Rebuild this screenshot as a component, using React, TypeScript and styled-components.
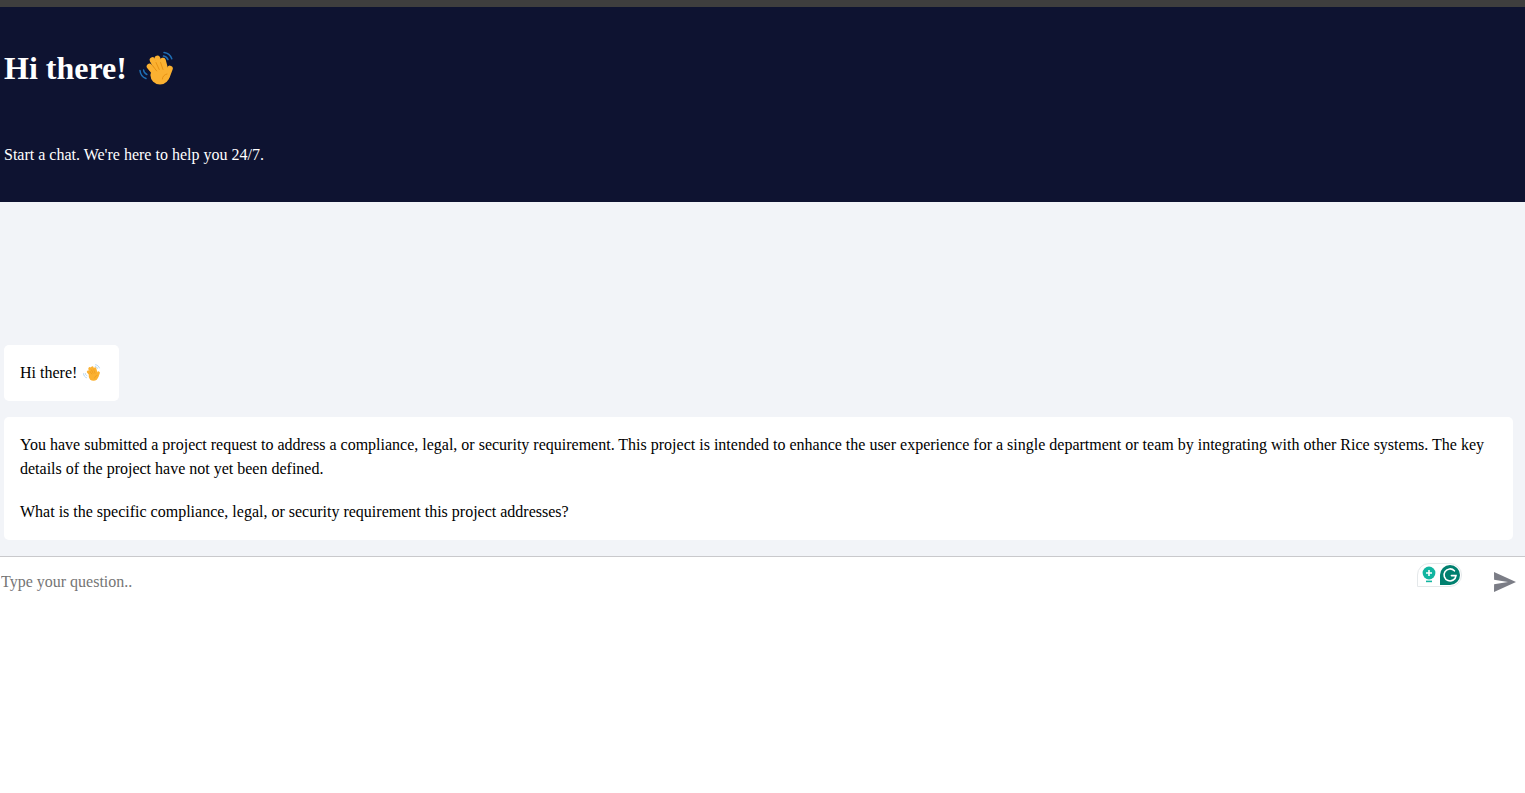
import React from 'react';
import styled, { createGlobalStyle } from 'styled-components';

const GlobalStyle = createGlobalStyle`
  html, body {
    margin: 0;
    padding: 0;
    background: #fff;
    font-family: "Liberation Serif", "Times New Roman", serif;
    font-size: 16px;
    color: #000;
  }
`;

const Page = styled.div`
  display: flex;
  flex-direction: column;
  height: 793px;
  overflow: hidden;
`;

const TopStrip = styled.div`
  flex: none;
  height: 7px;
  background: #3e3e3e;
`;

const Header = styled.header`
  flex: none;
  box-sizing: border-box;
  height: 195px;
  padding: 43px 4px 0;
  background: #0e1331;
  color: #fff;
`;

const Title = styled.h1`
  display: flex;
  align-items: center;
  gap: 12px;
  margin: 0;
  height: 37px;
  font-size: 32px;
  line-height: 37px;
  font-weight: 700;
`;

const Subtitle = styled.p`
  margin: 59px 0 0;
  font-size: 16px;
  line-height: 18px;
`;

const Messages = styled.main`
  flex: none;
  box-sizing: border-box;
  height: 354px;
  display: flex;
  flex-direction: column;
  align-items: flex-start;
  justify-content: flex-end;
  gap: 16px;
  padding: 0 12px 16px 4px;
  background: #f2f4f8;
`;

const Bubble = styled.div`
  box-sizing: border-box;
  padding: 16px;
  background: #fff;
  border-radius: 5px;
  line-height: 24px;
`;

const Greeting = styled.span`
  display: inline-flex;
  align-items: center;
  gap: 6px;
  padding-right: 2px;
`;

const Paragraph = styled.p`
  margin: 0;

  & + & {
    margin-top: 19px;
  }
`;

const Composer = styled.form`
  flex: none;
  position: relative;
  display: flex;
  align-items: flex-start;
  height: 237px;
  border-top: 1px solid #c9c9cc;
`;

const QuestionInput = styled.input`
  flex: 1;
  min-width: 0;
  height: 50px;
  padding: 0 1px;
  border: 0;
  outline: 0;
  font-family: inherit;
  font-size: 16px;
  background: transparent;

  &::placeholder {
    color: #757575;
    opacity: 1;
  }
`;

const SendButton = styled.button`
  flex: none;
  display: flex;
  align-items: center;
  justify-content: center;
  width: 22px;
  height: 22px;
  margin: 14px 9px 0 10px;
  padding: 0;
  border: 0;
  background: none;
`;

const GrammarlyBadge = styled.div`
  position: absolute;
  top: 6px;
  right: 63px;
  display: flex;
  align-items: center;
  gap: 3px;
  box-sizing: border-box;
  width: 45px;
  height: 24px;
  padding: 1px 1px 1px 3px;
  background: #fff;
  border: 1px solid #e4e8ea;
  border-radius: 12px 12px 12px 0;
`;

const WaveHand = ({ size, faded }: { size: number; faded?: boolean }) => (
  <svg width={size} height={size} viewBox="0 0 36 36" aria-hidden="true">
    <g fill="none" stroke={faded ? '#9cc7ea' : '#1f6fb5'} strokeWidth="1.5" strokeLinecap="round">
      <path d="M25 1.5c3.6.4 6.6 2.9 7.8 6.3" />
      <path d="M24.5 5c2 .3 3.7 1.7 4.5 3.6" />
      <path d="M1 19.5c.3 3.6 2.6 6.7 6 8" />
      <path d="M4.6 19c.2 2 1.5 3.7 3.3 4.5" />
    </g>
    <g fill="none" stroke="#fbb131" strokeWidth="5.6" strokeLinecap="round">
      <path d="M10.5 15.5l7.5 9" />
      <path d="M13.5 9l6.5 13" />
      <path d="M18.5 7.5l5 14" />
      <path d="M24 9.5l3.2 12" />
      <path d="M31 17.5l-3 8" />
    </g>
    <circle cx="21" cy="24" r="9.6" fill="#fbb131" />
    <g fill="none" stroke="#e58e12" strokeWidth=".9" strokeLinecap="round">
      <path d="M13.6 14.5l4 5.4" />
      <path d="M17 11.5l3.2 7" />
      <path d="M21.6 11.5l2.4 7" />
      <path d="M28 23c-2.4.4-4.6 2.4-4.6 5" />
    </g>
  </svg>
);

const PaperPlane = () => (
  <svg width="22" height="20" viewBox="0 0 22 20" aria-hidden="true">
    <path fill="#7b7d86" d="M0 0l22 10L0 20l.1-7.7L14 10 .1 7.7z" />
  </svg>
);

const BulbIcon = () => (
  <svg width="16" height="18" viewBox="0 0 16 18" aria-hidden="true">
    <circle cx="8" cy="7" r="6.4" fill="#11b5a0" />
    <path fill="#11b5a0" d="M5 14.6h6v1.6H5z" />
    <path fill="#fff" d="M7.2 4h1.6v2.2H11v1.6H8.8V10H7.2V7.8H5V6.2h2.2z" />
  </svg>
);

const GrammarlyIcon = () => (
  <svg width="20" height="20" viewBox="0 0 20 20" aria-hidden="true">
    <path fill="#00806f" d="M10 0a10 10 0 0 1 0 20H0V10A10 10 0 0 1 10 0z" />
    <path
      fill="none"
      stroke="#fff"
      strokeWidth="1.6"
      strokeLinecap="round"
      d="M14.4 5.8A6 6 0 1 0 16 10.6h-4.6"
    />
  </svg>
);

export default function App() {
  return (
    <Page>
      <GlobalStyle />
      <TopStrip />
      <Header>
        <Title>
          Hi there!
          <WaveHand size={36} />
        </Title>
        <Subtitle>Start a chat. We're here to help you 24/7.</Subtitle>
      </Header>
      <Messages>
        <Bubble>
          <Greeting>
            Hi there!
            <WaveHand size={18} faded />
          </Greeting>
        </Bubble>
        <Bubble>
          <Paragraph>
            You have submitted a project request to address a compliance, legal, or security requirement. This project
            is intended to enhance the user experience for a single department or team by integrating with other Rice
            systems. The key details of the project have not yet been defined.
          </Paragraph>
          <Paragraph>What is the specific compliance, legal, or security requirement this project addresses?</Paragraph>
        </Bubble>
      </Messages>
      <Composer onSubmit={(e) => e.preventDefault()}>
        <QuestionInput placeholder="Type your question.." />
        <GrammarlyBadge>
          <BulbIcon />
          <GrammarlyIcon />
        </GrammarlyBadge>
        <SendButton type="submit" aria-label="Send">
          <PaperPlane />
        </SendButton>
      </Composer>
    </Page>
  );
}
